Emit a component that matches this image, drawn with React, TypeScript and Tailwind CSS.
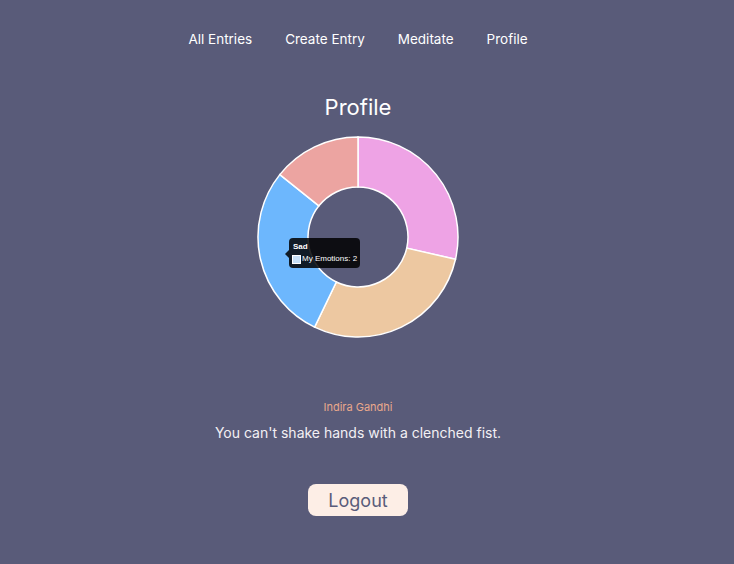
import React from "react";

const data = [
  { label: "Happy", value: 2, color: "#eea3e5" },
  { label: "Calm", value: 2, color: "#edc8a1" },
  { label: "Sad", value: 2, color: "#6db7fd" },
  { label: "Angry", value: 1, color: "#eca4a1" },
];

function arcPath(cx: number, cy: number, r0: number, r1: number, a0: number, a1: number) {
  const pt = (r: number, a: number) => [cx + r * Math.sin(a), cy - r * Math.cos(a)];
  const [x0, y0] = pt(r1, a0);
  const [x1, y1] = pt(r1, a1);
  const [x2, y2] = pt(r0, a1);
  const [x3, y3] = pt(r0, a0);
  const large = a1 - a0 > Math.PI ? 1 : 0;
  return `M${x0} ${y0} A${r1} ${r1} 0 ${large} 1 ${x1} ${y1} L${x2} ${y2} A${r0} ${r0} 0 ${large} 0 ${x3} ${y3} Z`;
}

function Donut() {
  const total = data.reduce((s, d) => s + d.value, 0);
  let acc = 0;
  return (
    <svg width="204" height="204" viewBox="0 0 204 204">
      {data.map((d) => {
        const a0 = (acc / total) * Math.PI * 2;
        acc += d.value;
        const a1 = (acc / total) * Math.PI * 2;
        return (
          <path
            key={d.label}
            d={arcPath(102, 102, 50, 100, a0, a1)}
            fill={d.color}
            stroke="#ffffff"
            strokeWidth="1.5"
          />
        );
      })}
    </svg>
  );
}

export default function App() {
  return (
    <div className="min-h-screen bg-[#595b79] font-['Inter',sans-serif]">
      <div className="w-[716px] flex flex-col items-center">
        {/* Nav */}
        <nav className="pt-[29px] flex gap-[33px] text-[13.5px] leading-5 text-white">
          <a>All Entries</a>
          <a>Create Entry</a>
          <a>Meditate</a>
          <a>Profile</a>
        </nav>

        <h1 className="mt-[42px] text-[22px] leading-8 text-white">Profile</h1>

        {/* Chart */}
        <div className="relative mt-[12px] w-[204px] h-[204px]">
          <Donut />
          <div className="absolute left-[33px] top-[103px] h-[30px] rounded-[4px] bg-black/85 pl-[3px] pr-[3px] pt-[3px] font-['Liberation_Sans',sans-serif] text-[8px] leading-[12px] text-white whitespace-nowrap">
            <div className="absolute -left-[4px] top-[12px] w-0 h-0 border-y-[4px] border-y-transparent border-r-[4px] border-r-black/85" />
            <div className="font-bold pl-[1px]">Sad</div>
            <div className="flex items-center gap-[1px]">
              <span className="inline-block w-[9px] h-[9px] bg-[#c6dff7] border border-white" />
              <span>My Emotions: 2</span>
            </div>
          </div>
        </div>

        <p className="mt-[60px] text-[11px] leading-4 text-[#e9a88c]">Indira Gandhi</p>
        <p className="mt-[7px] text-[14px] leading-[22px] text-[#f3f0f4]">
          You can't shake hands with a clenched fist.
        </p>

        <button className="mt-[40px] w-[100px] h-[32px] rounded-lg bg-[#fdeee6] text-[18px] text-[#5a5c7a]">
          Logout
        </button>
      </div>
    </div>
  );
}
